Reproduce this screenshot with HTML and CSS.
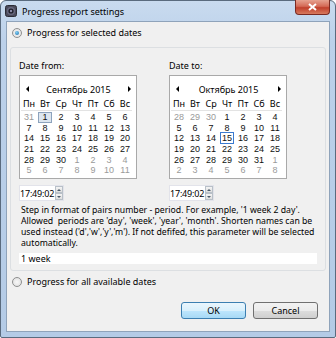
FILE: index.html
```html
<!DOCTYPE html>
<html lang="en">
<head>
    <meta charset="UTF-8">
    <title>Progress report settings</title>
    <link rel="stylesheet" href="styles.css">
</head>
<body>
    <div class="window">
        <div class="titlebar">
            <svg class="app-icon" width="12" height="12" viewBox="0 0 12 12">
                <rect x="0.5" y="0.5" width="11" height="11" rx="2" fill="#4b4b5a" stroke="#2c2c36"/>
                <circle cx="6" cy="6" r="4" fill="#6a6a80"/>
                <circle cx="6" cy="6" r="2.6" fill="#1f1f2a"/>
                <circle cx="6" cy="6" r="1.2" fill="#8d8da8"/>
            </svg>
            <span class="title">Progress report settings</span>
            <div class="close-btn">
                <svg width="9" height="8" viewBox="0 0 9 8">
                    <path d="M1 1 L8 7 M8 1 L1 7" stroke="#fff" stroke-width="2"/>
                </svg>
            </div>
        </div>

        <div class="client">
            <label class="radio-row">
                <span class="radio checked"></span>
                Progress for selected dates
            </label>

            <div class="group">
                <div class="dates">
                    <div class="date-col">
                        <div class="date-label">Date from:</div>
                        <div class="calendar">
                            <div class="cal-head">
                                <span class="arrow left"></span>
                                <span class="month">Сентябрь 2015</span>
                                <span class="arrow right"></span>
                            </div>
                            <div class="cal-names">
                                <span>Пн</span><span>Вт</span><span>Ср</span><span>Чт</span><span>Пт</span><span>Сб</span><span>Вс</span>
                            </div>
                            <div class="cal-days">
                                <span class="other">31</span><span class="selected">1</span><span>2</span><span>3</span><span>4</span><span>5</span><span>6</span>
                                <span>7</span><span>8</span><span>9</span><span>10</span><span>11</span><span>12</span><span>13</span>
                                <span>14</span><span>15</span><span>16</span><span>17</span><span>18</span><span>19</span><span>20</span>
                                <span>21</span><span>22</span><span>23</span><span>24</span><span>25</span><span>26</span><span>27</span>
                                <span>28</span><span>29</span><span>30</span><span class="other">1</span><span class="other">2</span><span class="other">3</span><span class="other">4</span>
                                <span class="other">5</span><span class="other">6</span><span class="other">7</span><span class="other">8</span><span class="other">9</span><span class="other">10</span><span class="other">11</span>
                            </div>
                        </div>
                        <div class="time-input">
                            <span class="time-text">17:49:02</span>
                            <div class="spin">
                                <span class="spin-btn"><i class="up"></i></span>
                                <span class="spin-btn"><i class="down"></i></span>
                            </div>
                        </div>
                    </div>

                    <div class="date-col">
                        <div class="date-label">Date to:</div>
                        <div class="calendar">
                            <div class="cal-head">
                                <span class="arrow left"></span>
                                <span class="month">Октябрь 2015</span>
                                <span class="arrow right"></span>
                            </div>
                            <div class="cal-names">
                                <span>Пн</span><span>Вт</span><span>Ср</span><span>Чт</span><span>Пт</span><span>Сб</span><span>Вс</span>
                            </div>
                            <div class="cal-days">
                                <span class="other">28</span><span class="other">29</span><span class="other">30</span><span>1</span><span>2</span><span>3</span><span>4</span>
                                <span>5</span><span>6</span><span>7</span><span>8</span><span>9</span><span>10</span><span>11</span>
                                <span>12</span><span>13</span><span>14</span><span class="today">15</span><span>16</span><span>17</span><span>18</span>
                                <span>19</span><span>20</span><span>21</span><span>22</span><span>23</span><span>24</span><span>25</span>
                                <span>26</span><span>27</span><span>28</span><span>29</span><span>30</span><span>31</span><span class="other">1</span>
                                <span class="other">2</span><span class="other">3</span><span class="other">4</span><span class="other">5</span><span class="other">6</span><span class="other">7</span><span class="other">8</span>
                            </div>
                        </div>
                        <div class="time-input">
                            <span class="time-text">17:49:02</span>
                            <div class="spin">
                                <span class="spin-btn"><i class="up"></i></span>
                                <span class="spin-btn"><i class="down"></i></span>
                            </div>
                        </div>
                    </div>
                </div>

                <p class="hint">Step in format of pairs number - period. For example, '1 week 2 day'. Allowed&nbsp; periods are 'day', 'week', 'year', 'month'. Shorten names can be used instead ('d','w','y','m'). If not defifed, this parameter will be selected automatically.</p>

                <div class="step-input">1 week</div>
            </div>

            <label class="radio-row second">
                <span class="radio"></span>
                Progress for all available dates
            </label>

            <div class="buttons">
                <button class="btn default">OK</button>
                <button class="btn">Cancel</button>
            </div>
        </div>
    </div>
</body>
</html>
```

FILE: styles.css
```css
body {
    margin: 0;
    font-family: "Noto Sans", sans-serif;
    font-size: 8px;
    color: #000;
    background: #fff;
}

.window {
    width: 336px;
    height: 338px;
    box-sizing: border-box;
    border: 1px solid #5a6b7e;
    border-radius: 6px 6px 2px 2px;
    background: linear-gradient(to bottom, #c9dbef 0px, #bcd1ea 40px, #b4cbe6 100%);
    display: flex;
    flex-direction: column;
}

.titlebar {
    height: 20px;
    display: flex;
    align-items: center;
    padding-left: 4px;
    position: relative;
}

.app-icon {
    margin-right: 5px;
}

.title {
    font-size: 9px;
    color: #000;
}

.close-btn {
    position: absolute;
    right: 5px;
    top: -1px;
    width: 35px;
    height: 15px;
    box-sizing: border-box;
    border: 1px solid #7a2a22;
    border-top: none;
    border-radius: 0 0 4px 4px;
    background: linear-gradient(to bottom, #e6a290 0%, #d46a56 45%, #c0402c 55%, #d77a5e 100%);
    display: flex;
    align-items: center;
    justify-content: center;
}

.client {
    margin: 0 5px 5px 5px;
    flex: 1;
    background: #f0f0f0;
    border: 1px solid #8fa3ba;
    padding: 4px 3px 0 3px;
    display: flex;
    flex-direction: column;
}

.radio-row {
    display: flex;
    align-items: center;
    font-size: 9px;
    height: 13px;
    padding-left: 2px;
}

.radio {
    width: 8px;
    height: 8px;
    border-radius: 50%;
    border: 1px solid #8e8f8f;
    background: radial-gradient(circle, #f8f8f8 0%, #dcdcdc 100%);
    margin-right: 5px;
    position: relative;
}

.radio.checked::after {
    content: "";
    position: absolute;
    left: 2px;
    top: 2px;
    width: 4px;
    height: 4px;
    border-radius: 50%;
    background: radial-gradient(circle at 40% 35%, #7fd0f5, #1a6aa8);
}

.group {
    margin-top: 8px;
    border: 1px solid #dcdfe2;
    border-radius: 3px;
    padding: 12px 8px 6px 8px;
}

.dates {
    display: grid;
    grid-template-columns: 118px 118px;
    column-gap: 32px;
}

.date-label {
    font-size: 9px;
    height: 12px;
    line-height: 12px;
    margin-bottom: 3px;
}

.calendar {
    width: 118px;
    height: 104px;
    box-sizing: border-box;
    border: 1px solid #a9a9a9;
    background: #fff;
    padding: 6px 0 0 1px;
}

.cal-head {
    display: flex;
    align-items: center;
    justify-content: space-between;
    height: 14px;
    padding: 0 5px 0 5px;
    font-size: 9px;
}

.arrow {
    width: 0;
    height: 0;
    border-top: 3px solid transparent;
    border-bottom: 3px solid transparent;
}

.arrow.left {
    border-right: 3px solid #000;
}

.arrow.right {
    border-left: 3px solid #000;
}

.cal-names,
.cal-days {
    display: grid;
    grid-template-columns: repeat(7, 16px);
    text-align: center;
    font-size: 9px;
}

.cal-names {
    height: 12px;
    line-height: 12px;
    margin-top: 2px;
    border-bottom: 1px solid #e3e3e3;
    margin-right: 4px;
}

.cal-days {
    font-family: "Liberation Sans", Arial, sans-serif;
    font-size: 9px;
    grid-auto-rows: 10.7px;
    line-height: 10.7px;
    color: #111;
    margin-top: 1px;
}

.cal-days .other {
    color: #9a9a9a;
}

.cal-days .selected {
    background: #dde6ef;
    border: 1px solid #8da3bd;
    line-height: 9px;
    margin: 0 1px;
}

.cal-days .today {
    border: 1px solid #3a7ad0;
    line-height: 10px;
    margin: -1px 1px 0 1px;
}

.time-input {
    display: flex;
    align-items: center;
    width: 45px;
    height: 16px;
    margin-top: 6px;
    box-sizing: border-box;
    background: #fff;
    border: 1px solid #e2e3ea;
}

.time-text {
    font-size: 9px;
    flex: 1;
    letter-spacing: -0.2px;
}

.spin {
    width: 8px;
    height: 14px;
    display: flex;
    flex-direction: column;
}

.spin-btn {
    flex: 1;
    border: 1px solid #b8c0c8;
    background: linear-gradient(#f4f4f4, #dedede);
    display: flex;
    align-items: center;
    justify-content: center;
}

.spin-btn i {
    width: 0;
    height: 0;
    border-left: 2px solid transparent;
    border-right: 2px solid transparent;
}

.spin-btn .up {
    border-bottom: 2px solid #4a5a6a;
}

.spin-btn .down {
    border-top: 2px solid #4a5a6a;
}

.hint {
    margin: 4px 0 0 2px;
    font-size: 8.7px;
    line-height: 11px;
}

.step-input {
    margin-top: 4px;
    height: 11px;
    line-height: 11px;
    background: #fff;
    font-size: 9px;
    padding-left: 2px;
}

.radio-row.second {
    margin-top: 4px;
}

.buttons {
    display: flex;
    justify-content: flex-end;
    gap: 7px;
    margin-top: 14px;
    padding-right: 8px;
}

.btn {
    width: 65px;
    height: 17px;
    font-family: "Noto Sans", sans-serif;
    font-size: 9px;
    border: 1px solid #707070;
    border-radius: 3px;
    background: linear-gradient(to bottom, #f2f2f2 0%, #ebebeb 50%, #dddddd 51%, #cfcfcf 100%);
    padding: 0;
    color: #000;
}

.btn.default {
    border-color: #3c7fb1;
    background: linear-gradient(to bottom, #eaf6fd 0%, #d9f0fc 50%, #bee6fd 51%, #a7d9f5 100%);
}
```
